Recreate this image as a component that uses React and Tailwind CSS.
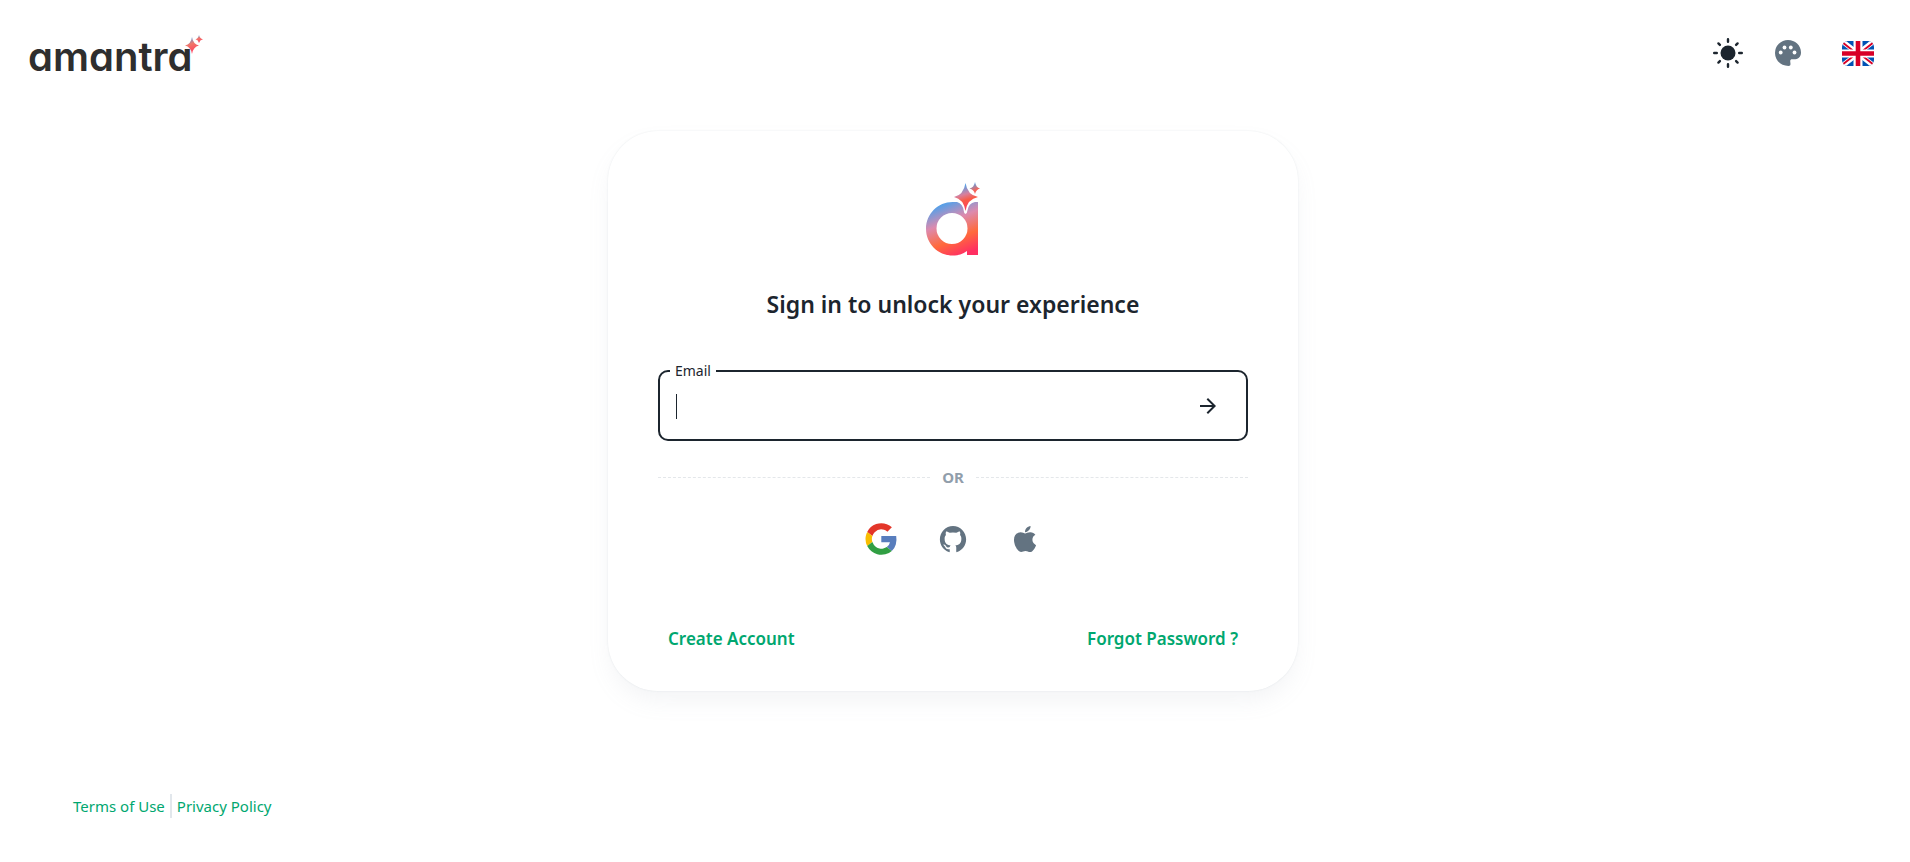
import { FaApple } from "react-icons/fa";
import { IoLogoGithub } from "react-icons/io5";
import { MdArrowForward } from "react-icons/md";

function Wordmark() {
  return (
    <a href="#home" className="flex items-start text-[#2e2e2e]">
      <span className="pt-2 font-['Inter',sans-serif] text-[40px] leading-8 font-semibold [font-feature-settings:'cv11']">
        amantra
      </span>
      <svg viewBox="0 0 18 20" className="mt-0.5 -ml-2 h-5 w-[18px]" aria-hidden="true">
        <defs>
          <linearGradient id="word-spark" x1="0" y1="0" x2="0.3" y2="1">
            <stop offset="0.1" stopColor="#5aa0e6" />
            <stop offset="0.5" stopColor="#f0776a" />
            <stop offset="1" stopColor="#ff4060" />
          </linearGradient>
        </defs>
        <g fill="url(#word-spark)">
          <path d="M7 2Q8 9 14 10.500Q8 12 7 19Q6 12 0 10.500Q6 9 7 2Z" />
          <path d="M14 0Q14.700 3.500 18 4.200Q14.700 5 14 8Q13.300 5 10.500 4.200Q13.300 3.500 14 0Z" />
        </g>
      </svg>
    </a>
  );
}

function BrandMark() {
  return (
    <svg viewBox="0 0 54 74" className="h-[74px] w-[54px]" aria-hidden="true">
      <defs>
        <linearGradient id="mark" x1="12" y1="20" x2="34" y2="74" gradientUnits="userSpaceOnUse">
          <stop offset="0.08" stopColor="#5a9fe6" />
          <stop offset="0.38" stopColor="#dd8aae" />
          <stop offset="0.7" stopColor="#ff6a3c" />
          <stop offset="1" stopColor="#ff2f62" />
        </linearGradient>
        <linearGradient id="spark-big" x1="36" y1="1" x2="44" y2="29" gradientUnits="userSpaceOnUse">
          <stop offset="0.1" stopColor="#5aa0e6" />
          <stop offset="0.4" stopColor="#d87f9c" />
          <stop offset="0.6" stopColor="#f95a45" />
          <stop offset="1" stopColor="#ff3a66" />
        </linearGradient>
        <linearGradient id="spark-small" x1="47" y1="0" x2="52" y2="13" gradientUnits="userSpaceOnUse">
          <stop offset="0.1" stopColor="#5aa0e6" />
          <stop offset="0.6" stopColor="#f4665a" />
          <stop offset="1" stopColor="#ff4a50" />
        </linearGradient>
      </defs>
      <path
        fill="url(#mark)"
        fillRule="evenodd"
        d="M26.500 20H31Q37 22 37.800 29Q38 32 39.500 32Q41 32 41.300 29Q42.500 21 49 20H52V73H41V69C37 72 32 73.500 26.500 73.500C12 73.500 0 61.500 0 46.700C0 32 12 20 26.500 20ZM26 31A15.500 15.500 0 1 0 26 62A15.500 15.500 0 1 0 26 31Z"
      />
      <path fill="url(#spark-big)" d="M39.500 1Q41.500 13 52 15Q41.500 17 39.500 29Q37.500 17 28 15Q37.500 13 39.500 1Z" />
      <path fill="url(#spark-small)" d="M49 0Q50 5.500 54 6.500Q50 7.500 49 12Q48 7.500 43.500 6.500Q48 5.500 49 0Z" />
    </svg>
  );
}

function SunIcon() {
  return (
    <svg viewBox="0 0 32 32" className="size-8" aria-hidden="true">
      <circle cx="16" cy="16" r="7.5" fill="#1c252e" />
      <path
        d="M16 2.200v2.600M16 27.200v2.600M2.200 16h2.600M27.200 16h2.600M6.400 6.400l1.500 1.500M24.100 24.100l1.500 1.500M6.400 25.600l1.500-1.500M24.100 7.900l1.500-1.500"
        stroke="#1c252e"
        strokeWidth="2.4"
        strokeLinecap="round"
      />
    </svg>
  );
}

function PaletteIcon() {
  return (
    <svg viewBox="0 0 26 26" className="size-[26px]" aria-hidden="true">
      <path
        fill="#637381"
        d="M13 0A13 13 0 0 0 0 13C0 20.500 6 26 13.500 26C15 26 15.500 25.300 15.500 24C15.500 22.800 15.200 22 15.200 21C15.200 19.600 16.200 19 17.800 19.200C22 19.700 26 17.800 26 12.500C26 5 20 0 13 0Z"
      />
      <g fill="#fff">
        <circle cx="5.7" cy="12.500" r="1.9" />
        <circle cx="9.500" cy="7.500" r="1.9" />
        <circle cx="15.800" cy="7.500" r="1.9" />
        <circle cx="19.500" cy="12.500" r="1.9" />
      </g>
    </svg>
  );
}

function FlagIcon() {
  return (
    <svg viewBox="0 0 32 25" className="h-[25px] w-8 rounded-md" aria-hidden="true">
      <path fill="#0052b4" d="M0 0h32v25H0z" />
      <path d="M0 0L32 25M32 0L0 25" stroke="#fff" strokeWidth="5" />
      <path d="M0 1L14 12M32 24L18 13M32 1L18 12M0 24L14 13" stroke="#d80027" strokeWidth="1.8" />
      <path d="M16 0V25" stroke="#fff" strokeWidth="9" />
      <path d="M0 12.500H32" stroke="#fff" strokeWidth="8" />
      <path d="M16 0V25M0 12.500H32" stroke="#d80027" strokeWidth="4.600" />
    </svg>
  );
}

function GoogleIcon() {
  return (
    <svg viewBox="0 0 128 128" className="size-8" aria-hidden="true">
      <path fill="#e33629" d="M44.590 4.210a64 64 0 0 1 42.610.370a61.220 61.220 0 0 1 20.350 12.620c-2 2.140-4.110 4.140-6.220 6.220Q95.580 29.230 89.800 35a34.280 34.280 0 0 0-13.640-8a37.170 37.170 0 0 0-37.460 9.740a39.250 39.250 0 0 0-9.180 14.910L8.760 35.600A63.530 63.530 0 0 1 44.590 4.210z" />
      <path fill="#f8bd00" d="M3.260 51.500a62.930 62.930 0 0 1 5.500-15.900l20.730 16.090a38.310 38.310 0 0 0 0 24.630q-10.360 8-20.730 16.080a63.330 63.330 0 0 1-5.500-40.900z" />
      <path fill="#587dbd" d="M65.270 52.150h59.520a74.330 74.330 0 0 1-1.610 33.580a57.440 57.440 0 0 1-16 26.260c-6.690-5.220-13.410-10.400-20.100-15.620a29.720 29.720 0 0 0 12.660-19.540H65.270c-.010-8.220 0-16.450 0-24.680z" />
      <path fill="#319f43" d="M8.750 92.400q10.370-8 20.730-16.080A39.300 39.300 0 0 0 44 95.740a37.160 37.160 0 0 0 14.080 6.080a41.290 41.290 0 0 0 15.100 0a36.160 36.160 0 0 0 13.930-5.500c6.690 5.220 13.410 10.400 20.100 15.620a57.130 57.130 0 0 1-25.900 13.470a67.600 67.600 0 0 1-32.360-.350a63 63 0 0 1-23-11.590A63.730 63.730 0 0 1 8.750 92.400z" />
    </svg>
  );
}

export default function App() {
  return (
    <div className="flex min-h-screen flex-col bg-white font-['Noto_Sans',sans-serif] text-[#1c252e]">
      <header className="flex items-center justify-between pt-[33px] pr-9 pb-8 pl-7">
        <Wordmark />
        <div className="flex items-center">
          <button type="button" aria-label="Toggle theme" className="mr-[31px]">
            <SunIcon />
          </button>
          <button type="button" aria-label="Colour palette" className="mr-[41px]">
            <PaletteIcon />
          </button>
          <button type="button" aria-label="Language">
            <FlagIcon />
          </button>
        </div>
      </header>

      <main className="flex justify-center pt-[26px] pr-5 pl-4">
        <section className="flex w-full max-w-[690px] flex-col items-center rounded-[50px] bg-white px-[50px] pt-[51px] pb-[38px] shadow-[0_0_2px_0_rgba(145,158,171,0.2),0_12px_24px_-4px_rgba(145,158,171,0.12)]">
          <BrandMark />
          <h1 className="mt-[30px] text-center text-[23px] leading-9 font-[650]">Sign in to unlock your experience</h1>

          <form className="mt-[39px] w-full" onSubmit={(e) => e.preventDefault()}>
            <fieldset className="flex h-20 w-full items-center rounded-[10px] border-2 border-[#1c252e] pr-5 pb-2 pl-4">
              <legend className="-ml-1.5 px-[5px] text-sm leading-5">
                <label htmlFor="email">Email</label>
              </legend>
              <span className="h-[25px] w-px bg-[#1c252e]" />
              <input id="email" type="email" className="h-10 min-w-0 flex-1 outline-none" />
              <button type="submit" aria-label="Continue" className="grid size-9 place-items-center">
                <MdArrowForward className="size-6" />
              </button>
            </fieldset>
          </form>

          <div className="mt-6 flex w-full items-center gap-3 text-[15px] leading-6 font-bold text-[#919eab]">
            <span className="flex-1 border-t border-dashed border-[#e4e7ea]" />
            OR
            <span className="flex-1 border-t border-dashed border-[#e4e7ea]" />
          </div>

          <div className="mt-[34px] flex items-center gap-10 text-[#637381]">
            <button type="button" aria-label="Sign in with Google">
              <GoogleIcon />
            </button>
            <button type="button" aria-label="Sign in with GitHub" className="grid size-8 place-items-center">
              <IoLogoGithub className="size-[30px]" />
            </button>
            <button type="button" aria-label="Sign in with Apple" className="grid size-8 place-items-center">
              <FaApple className="size-[30px]" />
            </button>
          </div>

          <div className="mt-[70px] flex w-full justify-between px-[10px] text-[17px] leading-7 font-[650] text-[#00a76f]">
            <a href="#create">Create Account</a>
            <a href="#forgot">Forgot Password ?</a>
          </div>
        </section>
      </main>

      <footer className="mt-[103px] flex items-center px-[73px] pb-10 text-[15px] leading-6 text-[#00a76f]">
        <a href="#terms">Terms of Use</a>
        <span className="mx-[5px] h-6 w-[2px] bg-[#e2e7ec]" />
        <a href="#privacy">Privacy Policy</a>
      </footer>
    </div>
  );
}
